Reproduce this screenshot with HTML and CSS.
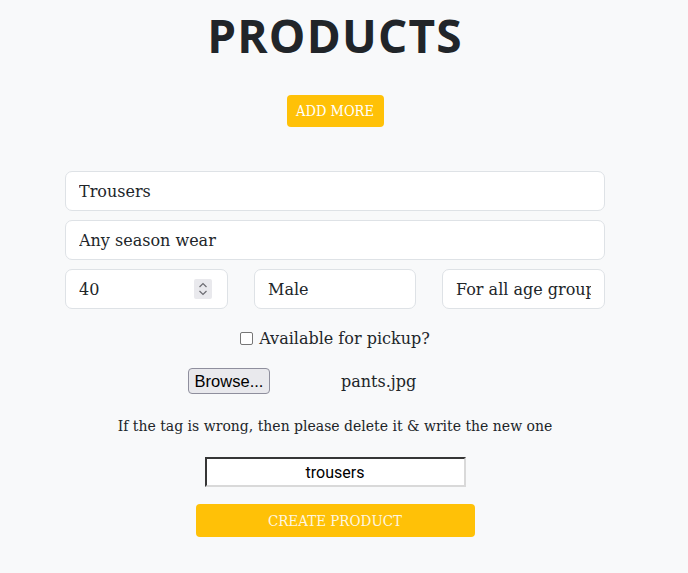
FILE: index.html
```html
<!DOCTYPE html>
<html>
<head>
<meta charset="utf-8">
<link rel="stylesheet" href="styles.css">
</head>
<body>
<div class="page">
  <h1 class="title">PRODUCTS</h1>
  <button class="btn btn-add">ADD MORE</button>
  <form class="form">
    <input class="field" type="text" value="Trousers">
    <input class="field" type="text" value="Any season wear">
    <div class="row3">
      <div class="num-wrap">
        <input class="field" type="text" value="40">
        <span class="spinner">
          <svg width="18" height="20" viewBox="0 0 18 20"><path d="M5.5 8 L9 4.5 L12.5 8" fill="none" stroke="#6c6c72" stroke-width="1.2"/><path d="M5.5 12 L9 15.5 L12.5 12" fill="none" stroke="#6c6c72" stroke-width="1.2"/></svg>
        </span>
      </div>
      <input class="field" type="text" value="Male">
      <input class="field" type="text" value="For all age groups">
    </div>
    <label class="check-row"><span class="checkbox"></span>Available for pickup?</label>
    <div class="file-row">
      <span class="browse">Browse...</span>
      <span class="filename">pants.jpg</span>
    </div>
    <p class="hint">If the tag is wrong, then please delete it &amp; write the new one</p>
    <input class="tag" type="text" value="trousers">
    <button class="btn btn-create" type="button">CREATE PRODUCT</button>
  </form>
</div>
</body>
</html>
```
FILE: styles.css
```css
html, body {
  margin: 0;
  padding: 0;
  background: #f8f9fa;
}
body {
  font-family: "DejaVu Serif", "Liberation Serif", serif;
  color: #212529;
}
.page {
  width: 670px;
  display: flex;
  flex-direction: column;
  align-items: center;
}
.title {
  font-family: "Open Sans", "DejaVu Sans", sans-serif;
  font-weight: 700;
  font-size: 46px;
  line-height: 56px;
  letter-spacing: 1.2px;
  margin: 7px 0 0 0;
  color: #212529;
}
.btn {
  border: none;
  background: #ffc107;
  color: #fff;
  font-family: "DejaVu Serif Condensed", "DejaVu Serif", serif;
  font-stretch: condensed;
  border-radius: 4px;
  cursor: pointer;
}
.btn-add {
  margin-top: 32px;
  width: 97px;
  height: 32px;
  font-size: 14.5px;
  padding: 0;
}
.form {
  width: 540px;
  margin-top: 44px;
  display: flex;
  flex-direction: column;
  align-items: center;
}
.field {
  box-sizing: border-box;
  width: 100%;
  height: 40px;
  border: 1px solid #dee2e6;
  border-radius: 7px;
  background: #fff;
  padding: 0 13px;
  font-family: "DejaVu Serif", serif;
  font-size: 16px;
  color: #212529;
  margin: 0 0 9px 0;
  outline: none;
}
.row3 {
  width: 100%;
  display: grid;
  grid-template-columns: 163px 162px 163px;
  column-gap: 26px;
}
.num-wrap {
  position: relative;
}
.spinner {
  position: absolute;
  left: 129px;
  top: 10px;
  width: 18px;
  height: 20px;
  background: #e9e9ed;
  border-radius: 2px;
  display: block;
}
.spinner svg { display: block; }
.check-row {
  display: flex;
  align-items: center;
  font-size: 16px;
  margin-top: 8px;
  height: 24px;
}
.checkbox {
  width: 11px;
  height: 11px;
  border: 1.5px solid #767676;
  border-radius: 2px;
  background: #fff;
  margin-right: 6px;
}
.file-row {
  display: flex;
  align-items: center;
  align-self: flex-start;
  margin-left: 123px;
  margin-top: 18px;
}
.browse {
  box-sizing: border-box;
  width: 82px;
  height: 26px;
  border: 1px solid #8f8f9d;
  border-radius: 4px;
  background: #e9e9ed;
  font-family: "Liberation Sans", Arial, sans-serif;
  font-size: 16.5px;
  display: flex;
  align-items: center;
  justify-content: center;
  color: #000;
}
.filename {
  margin-left: 71px;
  font-size: 16px;
}
.hint {
  font-size: 14px;
  margin: 20px 0 0 0;
  line-height: 24px;
}
.tag {
  box-sizing: border-box;
  width: 261px;
  height: 30px;
  margin-top: 19px;
  border: 2px inset #a0a0a0;
  border-top-color: #8a8a8a;
  border-left-color: #8a8a8a;
  border-right-color: #d9d9d9;
  border-bottom-color: #d9d9d9;
  background: #fff;
  text-align: center;
  font-family: Roboto, "Liberation Sans", sans-serif;
  font-size: 16px;
  color: #000;
  padding: 0;
  outline: none;
}
.btn-create {
  margin-top: 17px;
  width: 279px;
  height: 33px;
  font-size: 15px;
  padding: 0;
  color: #fdf6e0;
}
```
